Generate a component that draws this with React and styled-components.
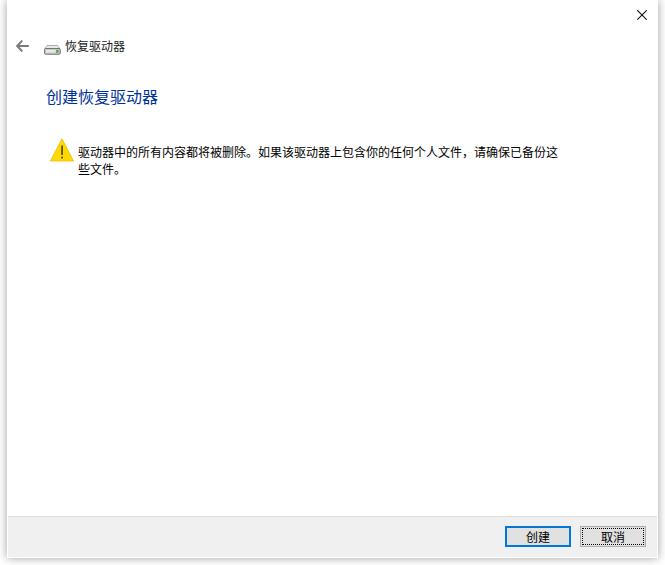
import React from "react";
import styled, { createGlobalStyle } from "styled-components";

const Global = createGlobalStyle`
  html, body {
    margin: 0;
    padding: 0;
    background: #fff;
  }
  body {
    font-family: "Microsoft YaHei", "Noto Sans CJK SC", sans-serif;
    color: #000;
  }
`;

const Page = styled.div`
  width: 665px;
  height: 565px;
  padding-left: 7px;
  box-sizing: border-box;
  background: #fff;
  overflow: hidden;
`;

const Window = styled.div`
  width: 651px;
  height: 558px;
  background: #fff;
  box-shadow: 0 0 9px rgba(0, 0, 0, 0.38);
  display: flex;
  flex-direction: column;
`;

const CloseRow = styled.div`
  height: 39px;
  display: flex;
  justify-content: flex-end;
  padding: 10px 11px 0 0;
  box-sizing: border-box;
  flex: none;
`;

const NavBar = styled.div`
  display: flex;
  align-items: center;
  height: 14px;
  padding-left: 9px;
  flex: none;
`;

const Crumb = styled.span`
  font-size: 12px;
  line-height: 14px;
  margin-left: 4px;
  color: #1a1a1a;
`;

const Content = styled.div`
  flex: 1;
  padding: 32px 0 0 39px;
`;

const Heading = styled.div`
  font-size: 16px;
  line-height: 22px;
  color: #003399;
`;

const Notice = styled.div`
  display: flex;
  align-items: flex-start;
  margin-top: 31px;
`;

const NoticeText = styled.div`
  width: 482px;
  margin-left: 4px;
  padding-top: 5px;
  font-size: 12px;
  line-height: 17px;
`;

const Footer = styled.div`
  height: 41px;
  margin: 0 1px 1px;
  background: #f0f0f0;
  border-top: 1px solid #dfdfdf;
  display: flex;
  justify-content: flex-end;
  align-items: flex-start;
  gap: 9px;
  padding: 9px 11px 0 0;
  box-sizing: border-box;
  flex: none;
`;

const Button = styled.div`
  width: 66px;
  height: 21px;
  box-sizing: border-box;
  background: #e1e1e1;
  border: ${(p) => (p.$primary ? "2px solid #0078d7" : "1px solid #adadad")};
  display: flex;
  align-items: center;
  justify-content: center;
  font-size: 12px;
  position: relative;
  ${(p) =>
    p.$focused &&
    `&::after {
      content: "";
      position: absolute;
      inset: 1px;
      border: 1px dotted #000;
    }`}
`;

const CloseIcon = () => (
  <svg width="10" height="10" viewBox="0 0 10 10">
    <path d="M0.3 0.3 L9.7 9.7 M9.7 0.3 L0.3 9.7" stroke="#111" strokeWidth="1.1" fill="none" />
  </svg>
);

const BackIcon = () => (
  <svg width="13" height="12" viewBox="0 0 13 12">
    <path d="M6.2 0.6 L1.2 6 L6.2 11.4 M1.4 6 H12.8" stroke="#7a7a7a" strokeWidth="2" fill="none" />
  </svg>
);

const DriveIcon = () => (
  <svg width="17" height="11" viewBox="0 0 17 11" style={{ marginLeft: 15, marginTop: 6 }}>
    <path d="M3 1.5 H13.5 L16 5 H0.8 Z" fill="#e9e9e9" stroke="#9a9a9a" strokeWidth="0.8" />
    <rect x="0.5" y="4.5" width="15.8" height="5.8" rx="1.2" fill="#c9c9c9" stroke="#6a6a6a" strokeWidth="0.9" />
    <rect x="2" y="6" width="9.5" height="2.5" fill="#e8e8e8" />
    <rect x="12.2" y="5.8" width="2.2" height="3" fill="#4fa82a" />
  </svg>
);

const WarningIcon = () => (
  <svg width="24" height="24" viewBox="0 0 24 24" style={{ flex: "none", marginLeft: 4 }}>
    <path d="M12 0.8 L23.6 23 H0.4 Z" fill="#ffd800" stroke="#f0bc00" strokeWidth="0.8" strokeLinejoin="round" />
    <rect x="11.4" y="7.5" width="1.3" height="9.5" fill="#222" />
    <rect x="11.4" y="18.5" width="1.3" height="2" fill="#222" />
  </svg>
);

export default function App() {
  return (
    <Page>
      <Global />
      <Window>
        <CloseRow>
          <CloseIcon />
        </CloseRow>
        <NavBar>
          <BackIcon />
          <DriveIcon />
          <Crumb>恢复驱动器</Crumb>
        </NavBar>
        <Content>
          <Heading>创建恢复驱动器</Heading>
          <Notice>
            <WarningIcon />
            <NoticeText>
              {"驱动器中的所有内容都将被删除。如果该驱动器上包含你的任何个人文件\uFF0C请确保已备份这些文件。"}
            </NoticeText>
          </Notice>
        </Content>
        <Footer>
          <Button $primary>创建</Button>
          <Button $focused>取消</Button>
        </Footer>
      </Window>
    </Page>
  );
}
